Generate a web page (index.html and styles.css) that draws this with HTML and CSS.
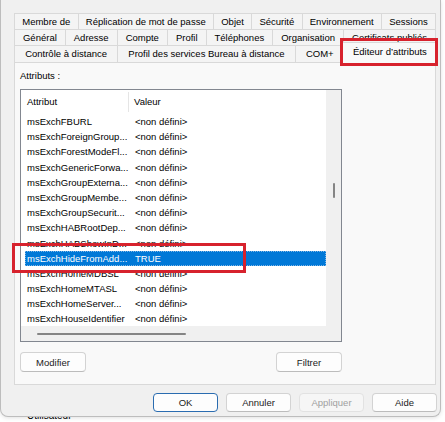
FILE: index.html
```html
<!DOCTYPE html>
<html lang="fr">
<head>
<meta charset="utf-8">
<title>Propriétés</title>
<link rel="stylesheet" href="styles.css">
</head>
<body>
<div class="under">Utilisateur</div>
<div class="dialog">
  <div class="tabs">
    <div class="tabrow">
      <div class="tab">Membre de</div>
      <div class="tab">Réplication de mot de passe</div>
      <div class="tab">Objet</div>
      <div class="tab">Sécurité</div>
      <div class="tab">Environnement</div>
      <div class="tab last">Sessions</div>
    </div>
    <div class="tabrow">
      <div class="tab">Général</div>
      <div class="tab">Adresse</div>
      <div class="tab">Compte</div>
      <div class="tab">Profil</div>
      <div class="tab">Téléphones</div>
      <div class="tab">Organisation</div>
      <div class="tab last">Certificats publiés</div>
    </div>
    <div class="tabrow bottom">
      <div class="tab">Contrôle à distance</div>
      <div class="tab">Profil des services Bureau à distance</div>
      <div class="tab">COM+</div>
      <div class="tab active">Éditeur d’attributs</div>
    </div>
  </div>
  <div class="page">
    <div class="label">Attributs :</div>
    <div class="listbox">
      <div class="lv">
        <div class="lv-head">
          <div class="hc1">Attribut</div>
          <div class="hc2">Valeur</div>
        </div>
        <div class="row"><div class="c1">msExchFBURL</div><div class="c2">&lt;non défini&gt;</div></div>
        <div class="row"><div class="c1">msExchForeignGroup...</div><div class="c2">&lt;non défini&gt;</div></div>
        <div class="row"><div class="c1">msExchForestModeFl...</div><div class="c2">&lt;non défini&gt;</div></div>
        <div class="row"><div class="c1">msExchGenericForwa...</div><div class="c2">&lt;non défini&gt;</div></div>
        <div class="row"><div class="c1">msExchGroupExterna...</div><div class="c2">&lt;non défini&gt;</div></div>
        <div class="row"><div class="c1">msExchGroupMembe...</div><div class="c2">&lt;non défini&gt;</div></div>
        <div class="row"><div class="c1">msExchGroupSecurit...</div><div class="c2">&lt;non défini&gt;</div></div>
        <div class="row"><div class="c1">msExchHABRootDep...</div><div class="c2">&lt;non défini&gt;</div></div>
        <div class="row"><div class="c1">msExchHABShowInD...</div><div class="c2">&lt;non défini&gt;</div></div>
        <div class="row selected"><div class="c1">msExchHideFromAdd...</div><div class="c2">TRUE</div></div>
        <div class="row"><div class="c1">msExchHomeMDBSL</div><div class="c2">&lt;non défini&gt;</div></div>
        <div class="row"><div class="c1">msExchHomeMTASL</div><div class="c2">&lt;non défini&gt;</div></div>
        <div class="row"><div class="c1">msExchHomeServer...</div><div class="c2">&lt;non défini&gt;</div></div>
        <div class="row"><div class="c1">msExchHouseIdentifier</div><div class="c2">&lt;non défini&gt;</div></div>
      </div>
      <div class="vscroll"><div class="vthumb"></div></div>
      <div class="hscroll"><div class="hthumb"></div></div>
      <div class="corner"></div>
    </div>
    <div class="page-actions">
      <button class="btn" type="button">Modifier</button>
      <button class="btn" type="button">Filtrer</button>
    </div>
  </div>
  <div class="footer">
    <button class="btn default" type="button">OK</button>
    <button class="btn" type="button">Annuler</button>
    <button class="btn disabled" type="button">Appliquer</button>
    <button class="btn" type="button">Aide</button>
  </div>
</div>
<div class="mark mark-tab"></div>
<div class="mark mark-row"></div>
</body>
</html>
```

FILE: styles.css
```css
* { box-sizing: border-box; }
html, body { margin: 0; padding: 0; }
body {
  width: 445px;
  height: 422px;
  overflow: hidden;
  position: relative;
  background: #ffffff;
  font-family: "Liberation Sans", Arial, sans-serif;
  font-size: 9.5px;
  color: #000;
}
.under {
  position: absolute;
  left: 27px;
  top: 410px;
  font-size: 10px;
  line-height: 12px;
}
.dialog {
  position: relative;
  width: 441px;
  height: 417px;
  background: #f0f0f0;
  border: 1px solid #bdbdbd;
  border-top: none;
  border-radius: 0 0 8px 8px;
  padding: 13px 4px 0 13px;
  box-shadow: 0 1px 4px rgba(0,0,0,0.12);
}
.tabs { display: flex; flex-direction: column; }
.tabrow { display: flex; height: 16px; }
.tabrow.bottom { height: 17px; }
.tab {
  flex: 1 1 auto;
  padding: 0 4px;
  text-align: center;
  line-height: 15px;
  white-space: nowrap;
  background: #f4f4f4;
  border-top: 1px solid #d9d9d9;
  border-left: 1px solid #d9d9d9;
}
.tab.last { border-right: 1px solid #d9d9d9; }
.tab.active {
  position: relative;
  margin: -3px -2px -1px -2px;
  padding-top: 1px;
  background: #f9f9f9;
  border-right: 1px solid #d9d9d9;
}
.page {
  height: 323px;
  background: #f9f9f9;
  border: 1px solid #d9d9d9;
  padding: 7px 0 0 5px;
}
.label { height: 12px; line-height: 12px; }
.listbox {
  margin-top: 7px;
  width: 322px;
  height: 253px;
  background: #fff;
  border: 1px solid #828790;
  display: grid;
  grid-template-columns: 1fr 15px;
  grid-template-rows: 1fr 15px;
}
.lv { overflow: hidden; }
.lv-head { display: flex; height: 24px; }
.hc1 {
  width: 108px;
  margin: 2px 0;
  padding-left: 6px;
  line-height: 20px;
  border-right: 1px solid #e5e5e5;
}
.hc2 { padding-left: 5px; line-height: 24px; }
.row {
  display: flex;
  height: 15.2px;
  line-height: 15.2px;
  margin-left: 4px;
  white-space: nowrap;
}
.row .c1 { width: 104px; padding-left: 2px; overflow: hidden; }
.row .c2 { padding-left: 6px; }
.row.selected {
  background: #0078d7;
  color: #fff;
  outline: 1px dotted #7fb6e6;
  outline-offset: -1px;
}
.vscroll {
  background: #f0f0f0;
  display: flex;
  flex-direction: column;
  align-items: center;
}
.vthumb {
  margin-top: 93px;
  width: 2px;
  height: 15px;
  background: #858585;
  border-radius: 1px;
}
.hscroll {
  background: #f0f0f0;
  display: flex;
  align-items: center;
}
.hthumb {
  margin-left: 16px;
  width: 149px;
  height: 2px;
  background: #858585;
  border-radius: 1px;
}
.corner { background: #f0f0f0; }
.page-actions {
  display: flex;
  justify-content: space-between;
  width: 322px;
  margin-top: 10px;
}
.btn {
  width: 66px;
  height: 20px;
  padding: 0;
  font: inherit;
  color: #1b1b1b;
  background: #fdfdfd;
  border: 1px solid #d3d3d3;
  border-bottom-color: #bcbcbc;
  border-radius: 4px;
}
.footer {
  display: flex;
  justify-content: flex-end;
  gap: 8px;
  margin-top: 8px;
  margin-right: -1px;
}
.footer .btn { width: 65px; height: 19px; }
.btn.default { border-color: #2a6cb0; }
.btn.disabled { color: #a0a0a0; background: #f6f6f6; border-color: #e2e2e2; }
.mark {
  position: absolute;
  border: 3px solid #d7222d;
  z-index: 5;
}
.mark-tab { left: 340px; top: 38px; width: 98px; height: 28px; }
.mark-row { left: 12px; top: 243px; width: 234px; height: 30px; }
```
